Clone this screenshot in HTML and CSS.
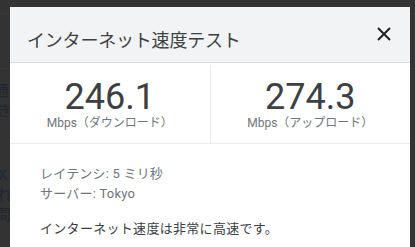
FILE: index.html
```html
<!DOCTYPE html>
<html lang="ja">
<head>
<meta charset="utf-8">
<title>インターネット速度テスト</title>
<link rel="stylesheet" href="styles.css">
</head>
<body>
<div class="page">
  <div class="page-bar"></div>
  <div class="page-rule"></div>
  <div class="page-text">
    <p class="l1">通常</p>
    <p class="l2">きます</p>
    <p class="l3">。</p>
    <p class="l4">X B</p>
    <p class="l5">れば</p>
    <p class="l6">間で</p>
  </div>
</div>
<div class="dialog" role="dialog">
  <div class="dialog-header">
    <h1 class="dialog-title">インターネット速度テスト</h1>
    <button class="close" aria-label="閉じる">
      <svg width="14" height="14" viewBox="0 0 14 14"><path d="M1 1 L13 13 M13 1 L1 13" stroke="#202124" stroke-width="2" fill="none"/></svg>
    </button>
  </div>
  <div class="metrics">
    <div class="metric">
      <div class="value">246.1</div>
      <div class="unit">Mbps（ダウンロード）</div>
    </div>
    <div class="metric">
      <div class="value">274.3</div>
      <div class="unit">Mbps（アップロード）</div>
    </div>
  </div>
  <div class="details">
    <div class="info">レイテンシ: 5 ミリ秒</div>
    <div class="info">サーバー: Tokyo</div>
    <div class="summary">インターネット速度は非常に高速です。</div>
  </div>
</div>
</body>
</html>
```

FILE: styles.css
```css
html, body {
  margin: 0;
  padding: 0;
  width: 415px;
  height: 247px;
  overflow: hidden;
  background: #333333;
}
body {
  font-family: Roboto, "Noto Sans CJK JP", sans-serif;
  position: relative;
}
.page {
  width: 415px;
  height: 247px;
  overflow: hidden;
}
.page-bar {
  height: 13px;
  border-bottom: 1px solid #3a3a3a;
}
.page-rule {
  height: 54px;
  border-bottom: 1px solid #3a3a3a;
}
.page-text {
  color: #222631;
  font-size: 15px;
  line-height: 20px;
}
.page-text p {
  margin: 0;
  white-space: nowrap;
}
.page-text .l1 { margin-top: 12px; margin-left: -6px; }
.page-text .l2 { margin-left: -3px; }
.page-text .l3 { margin-top: 26px; margin-left: -4px; font-size: 12px; line-height: 14px; }
.page-text .l4 { margin-top: 4px; margin-left: -2px; color: #1f2740; }
.page-text .l5 { margin-left: -3px; }
.page-text .l6 { margin-left: -4px; }

.dialog {
  position: absolute;
  left: 10px;
  top: 7px;
  width: 400px;
  height: 240px;
  overflow: hidden;
  background: #ffffff;
}
.dialog-header {
  background: #f1f3f4;
  border-bottom: 1px solid #dadce0;
  height: 55px;
  display: flex;
  align-items: flex-start;
  justify-content: space-between;
  padding: 0 19px 0 17px;
}
.dialog-title {
  margin: 20px 0 0 0;
  font-family: "Noto Sans CJK JP", sans-serif;
  font-weight: 400;
  font-size: 18px;
  line-height: 24px;
  color: #3c4043;
  letter-spacing: -0.2px;
}
.close {
  margin-top: 20px;
  padding: 0;
  border: 0;
  background: transparent;
  width: 14px;
  height: 14px;
  display: flex;
}
.metrics {
  display: flex;
  padding-top: 2px;
  border-bottom: 1px solid #ebebeb;
}
.metric {
  flex: 1;
  display: flex;
  flex-direction: column;
  align-items: center;
  padding: 13px 0 13px;
}
.metric:first-child {
  border-right: 1px solid #ebebeb;
}
.value {
  font-family: Roboto, sans-serif;
  font-size: 36px;
  line-height: 38px;
  color: #3c4043;
}
.unit {
  font-size: 12px;
  line-height: 14px;
  color: #70757a;
}
.details {
  padding: 20px 30px;
  font-size: 13px;
}
.info {
  line-height: 20px;
  color: #70757a;
  letter-spacing: 0.2px;
}
.summary {
  margin-top: 15px;
  line-height: 20px;
  color: #3c4043;
  letter-spacing: 0.3px;
}
```
